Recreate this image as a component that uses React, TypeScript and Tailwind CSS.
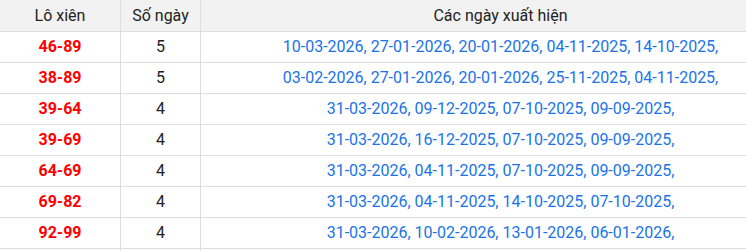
const rows: { pair: string; count: number; dates: string[] }[] = [
  { pair: "46-89", count: 5, dates: ["10-03-2026", "27-01-2026", "20-01-2026", "04-11-2025", "14-10-2025"] },
  { pair: "38-89", count: 5, dates: ["03-02-2026", "27-01-2026", "20-01-2026", "25-11-2025", "04-11-2025"] },
  { pair: "39-64", count: 4, dates: ["31-03-2026", "09-12-2025", "07-10-2025", "09-09-2025"] },
  { pair: "39-69", count: 4, dates: ["31-03-2026", "16-12-2025", "07-10-2025", "09-09-2025"] },
  { pair: "64-69", count: 4, dates: ["31-03-2026", "04-11-2025", "07-10-2025", "09-09-2025"] },
  { pair: "69-82", count: 4, dates: ["31-03-2026", "04-11-2025", "14-10-2025", "07-10-2025"] },
  { pair: "92-99", count: 4, dates: ["31-03-2026", "10-02-2026", "13-01-2026", "06-01-2026"] },
  { pair: "18-43", count: 4, dates: ["31-03-2026", "03-02-2026", "13-01-2026", "06-01-2026"] },
];

const cell = "border border-[#dddddd] h-[31px] p-0 text-center align-middle";

export default function App() {
  return (
    <div className="w-[746px] h-[251px] overflow-hidden bg-white font-['Roboto',sans-serif] text-[16px] leading-none">
      <table className="w-[801px] border-collapse table-fixed -mt-px -ml-px">
        <colgroup>
          <col className="w-[121px]" />
          <col className="w-[80px]" />
          <col className="w-[600px]" />
        </colgroup>
        <thead>
          <tr className="bg-[#f2f2f2] text-[#222222]">
            <th className={`${cell} h-[32px] font-normal`}>Lô xiên</th>
            <th className={`${cell} h-[32px] font-normal`}>Số ngày</th>
            <th className={`${cell} h-[32px] font-normal`}>Các ngày xuất hiện</th>
          </tr>
        </thead>
        <tbody>
          {rows.map((r) => (
            <tr key={r.pair}>
              <td className={`${cell} font-bold text-[#ff0000]`}>{r.pair}</td>
              <td className={`${cell} text-[#222222]`}>{r.count}</td>
              <td className={`${cell} text-[#1a73e8]`}>
                {r.dates.map((d) => `${d},`).join(" ")}
              </td>
            </tr>
          ))}
        </tbody>
      </table>
    </div>
  );
}
